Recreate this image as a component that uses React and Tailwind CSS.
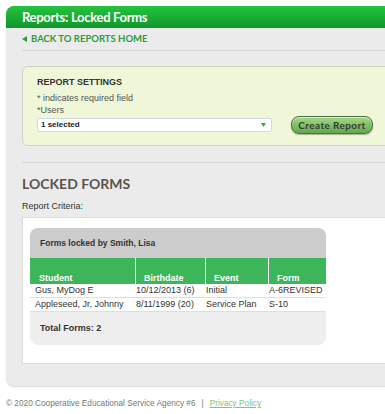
import React from 'react';

const rows = [
  { student: 'Gus, MyDog E', birthdate: '10/12/2013 (6)', event: 'Initial', form: 'A-6REVISED' },
  { student: 'Appleseed, Jr, Johnny', birthdate: '8/11/1999 (20)', event: 'Service Plan', form: 'S-10' },
];

const arial = { fontFamily: '"Liberation Sans", Arial, sans-serif' };

export default function App() {
  return (
    <div className="w-[385px] min-h-[414px] overflow-hidden bg-white" style={arial}>
      {/* Main panel */}
      <div className="ml-[6px] mt-[6px] w-[420px] rounded-tl-[8px] rounded-bl-[8px] bg-[#ebebeb] pb-[22px] shadow-[0_1px_1px_rgba(0,0,0,0.15)]">
        {/* Title bar */}
        <div className="h-[22px] rounded-tl-[8px] bg-gradient-to-b from-[#25c43f] to-[#0f962b] pl-[16px] flex items-center">
          <span className="font-['Lato'] font-bold text-[13px] leading-none tracking-[-0.3px] text-white">
            Reports: Locked Forms
          </span>
        </div>

        {/* Back link */}
        <div className="ml-[16px] h-[23px] border-b border-[#d6d6d6] flex items-center">
          <svg width="5" height="6" viewBox="0 0 5 6" className="mr-[4px]">
            <polygon points="5,0 5,6 0,3" fill="#2e9c3c" />
          </svg>
          <span className="font-['Lato'] font-bold text-[9.5px] leading-none text-[#2e9c3c]">
            BACK TO REPORTS HOME
          </span>
        </div>

        {/* Report settings */}
        <div className="ml-[16px] mt-[15px] h-[80px] box-border rounded-l-[6px] border border-[#cfd2c4] bg-[#eff7d8] pl-[14px] pt-[10px]">
          <div className="text-[9px] leading-[11px] font-bold text-[#333]">REPORT SETTINGS</div>
          <div className="mt-[5px] text-[9px] leading-[11px] text-[#555]">* indicates required field</div>
          <div className="mt-[1px] text-[9px] leading-[11px] text-[#555]">*Users</div>
          <div className="flex items-center h-[18px]">
            <div className="w-[235px] h-[14px] box-border rounded-[2px] border border-[#cfdbe3] bg-white flex items-center justify-between pl-[3px] pr-[5px]">
              <span className="text-[8px] font-bold leading-none text-[#222]">1 selected</span>
              <svg width="5" height="4" viewBox="0 0 5 4">
                <polygon points="0,0 5,0 2.5,4" fill="#3aa847" />
              </svg>
            </div>
            <button
              type="button"
              className="ml-[19px] w-[82px] h-[18px] box-border rounded-[8px] border border-[#556b4b] bg-gradient-to-b from-[#a3da86] to-[#5ea948] shadow-[inset_0_1px_0_rgba(255,255,255,0.5),0_1px_1px_rgba(0,0,0,0.3)] flex items-center justify-center"
            >
              <span className="font-['Lato'] font-bold text-[10px] leading-none tracking-[0.4px] text-[#383838]">
                Create Report
              </span>
            </button>
          </div>
        </div>

        {/* Divider */}
        <div className="ml-[16px] mt-[16px] h-px bg-[#d6d6d6]" />

        <div className="ml-[16px] mt-[12px] font-['Lato'] font-bold text-[14px] leading-[17px] text-[#5a5450]">
          LOCKED FORMS
        </div>
        <div className="ml-[16px] mt-[9px] text-[9px] leading-[11px] text-[#333]">Report Criteria:</div>

        {/* Results box */}
        <div className="ml-[16px] mt-[5px] border border-[#dddddd] bg-white pl-[7px] pt-[10px] pb-[18px]">
          <div className="w-[296px] rounded-[8px] overflow-hidden bg-[#eeeeee]">
            <div className="h-[30px] bg-[#cccccc] pl-[10px] flex items-center">
              <span className="text-[8.5px] font-bold leading-none text-[#333]">Forms locked by Smith, Lisa</span>
            </div>

            <div className="grid grid-cols-[106px_70px_63px_57px] h-[26px] bg-[#3db55b] text-white font-bold text-[9px] leading-[11px]">
              <div className="border-r border-white pl-[9px] flex items-end">Student</div>
              <div className="border-r border-white pl-[8px] flex items-end">Birthdate</div>
              <div className="border-r border-white pl-[8px] flex items-end">Event</div>
              <div className="pl-[8px] flex items-end">Form</div>
            </div>

            {rows.map((r) => (
              <div
                key={r.student}
                className="grid grid-cols-[106px_70px_63px_57px] h-[14px] box-border border-b border-[#dedede] bg-white text-[9px] leading-[13px] text-[#333]"
              >
                <div className="pl-[5px] whitespace-nowrap">{r.student}</div>
                <div className="whitespace-nowrap">{r.birthdate}</div>
                <div className="whitespace-nowrap">{r.event}</div>
                <div className="whitespace-nowrap">{r.form}</div>
              </div>
            ))}

            <div className="pl-[10px] pt-[11px] pb-[11px] text-[9px] font-bold leading-[11px] text-[#333]">
              Total Forms: 2
            </div>
          </div>
        </div>
      </div>

      {/* Footer */}
      <div className="ml-[6px] mt-[13px] text-[8.25px] leading-[10px] text-[#777]">
        © 2020 Cooperative Educational Service Agency #6
        <span className="mx-[6px]">|</span>
        <span className="text-[#7cc96c] underline">Privacy Policy</span>
      </div>
    </div>
  );
}
